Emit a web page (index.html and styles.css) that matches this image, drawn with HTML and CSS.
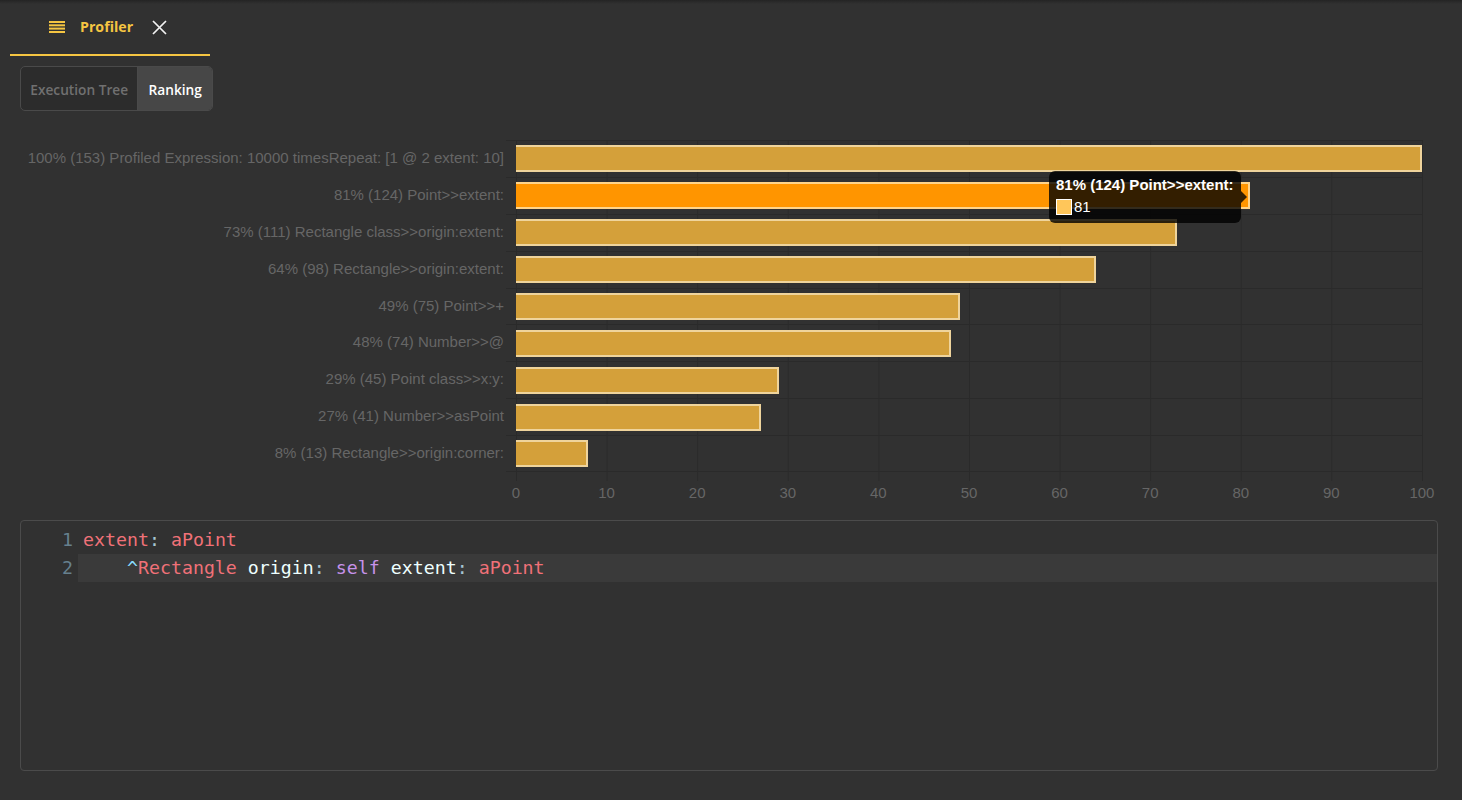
FILE: index.html
```html
<!DOCTYPE html>
<html>
<head>
<meta charset="utf-8">
<title>Profiler</title>
<link rel="stylesheet" href="styles.css">
</head>
<body>
<div class="app">
  <div class="tabbar">
    <div class="tab">
      <svg class="tab-icon" width="16" height="12" viewBox="0 0 16 12">
        <rect x="0" y="0" width="16" height="2" fill="#f5c542"/>
        <rect x="0" y="3.3" width="16" height="2" fill="#f5c542"/>
        <rect x="0" y="6.6" width="16" height="2" fill="#f5c542"/>
        <rect x="0" y="10" width="16" height="2" fill="#f5c542"/>
      </svg>
      <span class="tab-title">Profiler</span>
      <svg class="tab-close" width="15" height="15" viewBox="0 0 15 15">
        <path d="M1 1 L14 14 M14 1 L1 14" stroke="#f2f2f2" stroke-width="1.7" fill="none"/>
      </svg>
    </div>
  </div>

  <div class="segments">
    <div class="seg">Execution Tree</div>
    <div class="seg seg-active">Ranking</div>
  </div>

  <div class="chart">
    <div class="rows">
      <div class="row"><div class="label">100% (153) Profiled Expression: 10000 timesRepeat: [1 @ 2 extent: 10]</div><div class="track"><div class="bar" style="width:100%"></div></div></div>
      <div class="row"><div class="label">81% (124) Point&gt;&gt;extent:</div><div class="track"><div class="bar bar-hover" style="width:81%"></div>
        <div class="tooltip">
          <div class="tt-title">81% (124) Point&gt;&gt;extent:</div>
          <div class="tt-body"><span class="tt-swatch"></span>81</div>
        </div>
      </div></div>
      <div class="row"><div class="label">73% (111) Rectangle class&gt;&gt;origin:extent:</div><div class="track"><div class="bar" style="width:73%"></div></div></div>
      <div class="row"><div class="label">64% (98) Rectangle&gt;&gt;origin:extent:</div><div class="track"><div class="bar" style="width:64%"></div></div></div>
      <div class="row"><div class="label">49% (75) Point&gt;&gt;+</div><div class="track"><div class="bar" style="width:49%"></div></div></div>
      <div class="row"><div class="label">48% (74) Number&gt;&gt;@</div><div class="track"><div class="bar" style="width:48%"></div></div></div>
      <div class="row"><div class="label">29% (45) Point class&gt;&gt;x:y:</div><div class="track"><div class="bar" style="width:29%"></div></div></div>
      <div class="row"><div class="label">27% (41) Number&gt;&gt;asPoint</div><div class="track"><div class="bar" style="width:27%"></div></div></div>
      <div class="row row-last"><div class="label">8% (13) Rectangle&gt;&gt;origin:corner:</div><div class="track"><div class="bar" style="width:8%"></div></div></div>
    </div>
    <div class="xaxis">
      <span class="tick">0</span><span class="tick">10</span><span class="tick">20</span><span class="tick">30</span><span class="tick">40</span><span class="tick">50</span><span class="tick">60</span><span class="tick">70</span><span class="tick">80</span><span class="tick">90</span><span class="tick">100</span>
    </div>
  </div>

  <div class="editor">
    <div class="line">
      <span class="ln">1</span><span class="code"><span class="r">extent</span><span class="p">:</span> <span class="r">aPoint</span></span>
    </div>
    <div class="line line-active">
      <span class="ln">2</span><span class="code">    <span class="c">^</span><span class="r">Rectangle</span> <span class="w">origin</span><span class="p">:</span> <span class="k">self</span> <span class="w">extent</span><span class="p">:</span> <span class="r">aPoint</span></span>
    </div>
  </div>
</div>
</body>
</html>
```

FILE: styles.css
```css
* { box-sizing: border-box; }

html, body {
  margin: 0;
  padding: 0;
}

body {
  width: 1462px;
  height: 800px;
  overflow: hidden;
  background: #313131;
  font-family: "Open Sans", "Noto Sans", sans-serif;
}

.app {
  height: 800px;
  background: linear-gradient(#242424, #313131 4px);
}

/* Tab bar */
.tabbar {
  height: 56px;
  padding-left: 10px;
  display: flex;
}

.tab {
  width: 200px;
  height: 56px;
  border-bottom: 2px solid #f5c542;
  display: flex;
  align-items: center;
  padding-left: 39px;
}

.tab-icon { flex: none; }

.tab-title {
  margin-left: 15px;
  color: #f5c542;
  font-weight: 700;
  font-size: 14.2px;
  line-height: 20px;
}

.tab-close {
  margin-left: 19px;
  flex: none;
}

/* Segmented control */
.segments {
  margin: 10px 0 0 20px;
  display: flex;
  width: 193px;
  height: 45px;
  border: 1px solid #4a4a4a;
  border-radius: 5px;
  overflow: hidden;
  background: #2c2c2c;
}

.seg {
  display: flex;
  align-items: center;
  justify-content: center;
  font-size: 13.7px;
  font-weight: 600;
  color: #707070;
  width: 117px;
  padding-top: 1px;
}

.seg-active {
  width: 75px;
  border-left: 1px solid #4a4a4a;
  background: #474747;
  color: #ffffff;
}

/* Chart */
.chart {
  margin-top: 29px;
  padding-left: 20px;
  font-family: "Liberation Sans", Arial, sans-serif;
  font-size: 15px;
  color: #666666;
}

.rows {
  display: grid;
  grid-template-rows: repeat(9, 36.9px);
  width: 1403px;
}

.row {
  display: grid;
  grid-template-columns: 496px 907px;
}

.label {
  text-align: right;
  padding-right: 12px;
  white-space: nowrap;
  line-height: 36.9px;
  background: linear-gradient(#2a2a2a, #2a2a2a) right top / 10px 1px no-repeat;
}

.row-last .label {
  background:
    linear-gradient(#2a2a2a, #2a2a2a) right top / 10px 1px no-repeat,
    linear-gradient(#2a2a2a, #2a2a2a) right bottom / 10px 1px no-repeat;
}

.track {
  position: relative;
  border-top: 1px solid #2a2a2a;
  border-right: 1px solid #2a2a2a;
  background-image: linear-gradient(to right, #2a2a2a 1px, transparent 1px);
  background-size: 90.6px 100%;
  display: flex;
  align-items: center;
  width: 907px;
}

.row-last .track {
  border-bottom: 1px solid #2a2a2a;
}

.bar {
  height: 27px;
  max-width: 906px;
  background: #d4a03a;
  border: 2px solid #efd49c;
  border-left: none;
}

.bar-hover {
  background: #ff9500;
  border-color: #ffd48a;
}

.tooltip {
  position: absolute;
  left: 533px;
  top: -7px;
  width: 192px;
  height: 52px;
  background: rgba(0, 0, 0, 0.8);
  border-radius: 6px;
  padding: 5px 7px;
  color: #ffffff;
  z-index: 2;
}

.tooltip::after {
  content: "";
  position: absolute;
  right: -6px;
  top: 20px;
  border-top: 6px solid transparent;
  border-bottom: 6px solid transparent;
  border-left: 6px solid rgba(0, 0, 0, 0.8);
}

.tt-title {
  font-weight: bold;
  font-size: 15px;
  line-height: 18px;
  white-space: nowrap;
}

.tt-body {
  margin-top: 4px;
  display: flex;
  align-items: center;
  font-size: 15px;
  line-height: 18px;
}

.tt-swatch {
  width: 16px;
  height: 16px;
  background: #ffc65a;
  border: 1.5px solid #ffffff;
  margin-right: 2px;
}

.xaxis {
  margin-left: 496px;
  width: 907px;
  height: 38px;
  display: flex;
  justify-content: space-between;
  padding-right: 1px;
  background-image: linear-gradient(to right, #2a2a2a 1px, transparent 1px);
  background-size: 90.6px 9px;
  background-repeat: repeat-x;
}

.tick {
  width: 0;
  display: flex;
  justify-content: center;
  padding-top: 12px;
  line-height: 17px;
  white-space: nowrap;
}

/* Editor */
.editor {
  margin: 10px 0 0 20px;
  width: 1418px;
  height: 251px;
  border: 1px solid #4b4b4b;
  border-radius: 4px;
  padding-top: 5px;
  font-family: "DejaVu Sans Mono", "Liberation Mono", monospace;
  font-size: 18.25px;
}

.line {
  display: flex;
  height: 28px;
  line-height: 28px;
  white-space: pre;
}

.ln {
  width: 57px;
  flex: none;
  text-align: right;
  padding-right: 5px;
  color: #66808e;
}

.code {
  flex: 1;
  padding-left: 5px;
  color: #eeffff;
}

.line-active .code {
  background: #3a3a3a;
}

.r { color: #f07178; }
.p { color: #a6c4d2; }
.c { color: #89ddff; }
.w { color: #eeffff; }
.k { color: #c792ea; }
```
